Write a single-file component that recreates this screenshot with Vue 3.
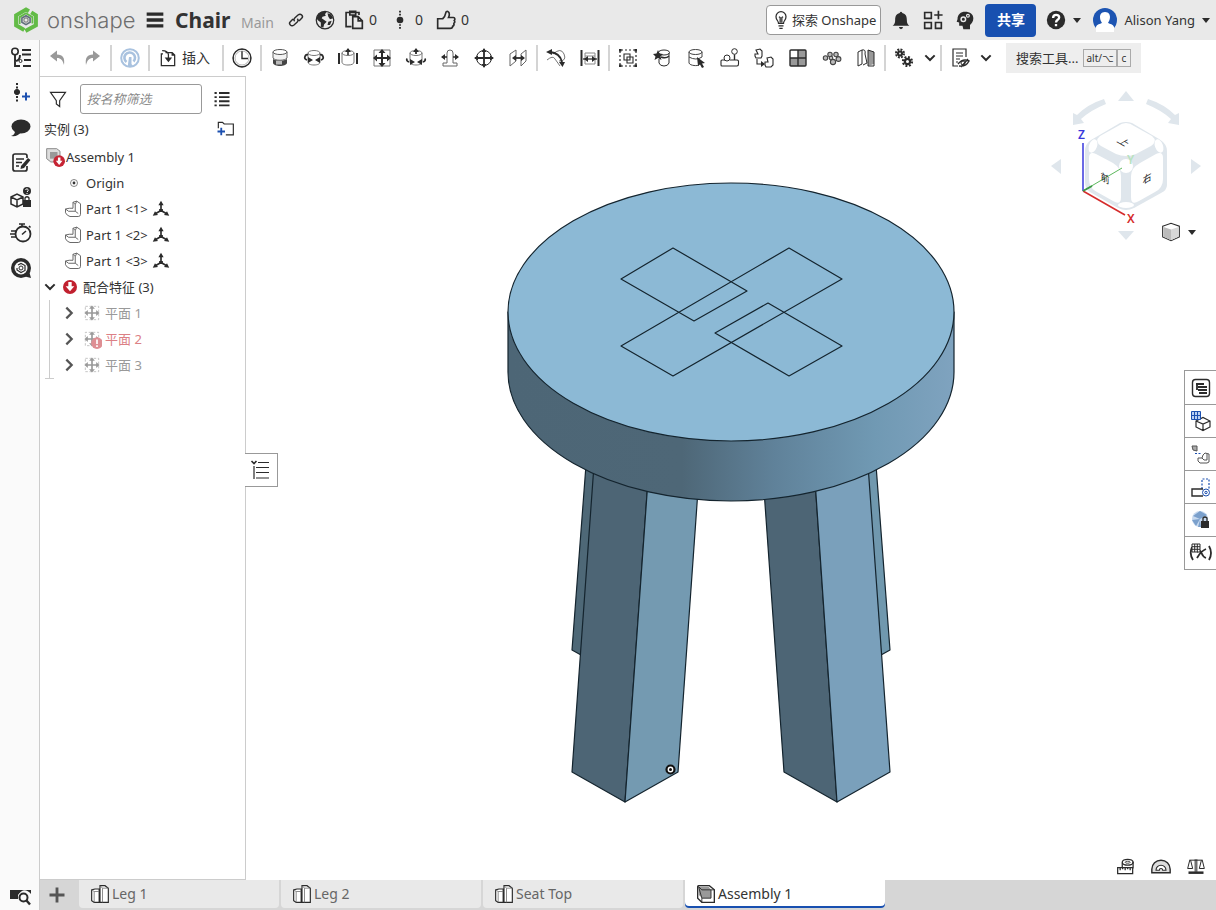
<template>
  <div class="app">
    <header class="topbar">
      <a class="brand" href="#" aria-label="onshape">
        <Icon name="logo" :size="28" />
        <span class="brand-name">onshape</span>
      </a>
      <button class="icon-btn menu" aria-label="菜单"><Icon name="menu" :size="20" /></button>
      <h1 class="doc-name">Chair</h1>
      <span class="workspace">Main</span>
      <button class="icon-btn link" aria-label="链接"><Icon name="link" :size="20" /></button>
      <button class="icon-btn globe" aria-label="公开"><Icon name="globe" :size="20" /></button>
      <button v-for="s in stats" :key="s.icon" class="stat" :class="s.icon">
        <Icon :name="s.icon" :size="20" />
        <span>{{ s.count }}</span>
      </button>
      <div class="spacer"></div>
      <button class="explore"><Icon name="bulb" :size="20" />探索 Onshape</button>
      <button class="icon-btn top-tool" aria-label="通知"><Icon name="bell" :size="20" /></button>
      <button class="icon-btn top-tool" aria-label="应用"><Icon name="apps" :size="20" /></button>
      <button class="icon-btn top-tool" aria-label="学习"><Icon name="head" :size="20" /></button>
      <button class="share">共享</button>
      <button class="icon-btn help" aria-label="帮助"><Icon name="help" :size="20" /><i class="caret"></i></button>
      <button class="account">
        <Icon name="avatar" :size="24" />
        <span>Alison Yang</span>
        <i class="caret"></i>
      </button>
    </header>

    <div class="body">
      <nav class="rail">
        <button v-for="r in rail" :key="r" class="icon-btn rail-btn" :aria-label="r"><Icon :name="r" :size="24" /></button>
        <button class="icon-btn rail-btn rail-end" aria-label="tabSearch"><Icon name="tabSearch" :size="24" /></button>
      </nav>

      <div class="workarea">
        <div class="toolbar">
          <template v-for="(group, i) in tools" :key="i">
            <span v-if="i" class="sep"></span>
            <button v-for="t in group" :key="t" class="icon-btn tool" :class="{ wide: t === 'insert', narrow: t.startsWith('chevron') }" :aria-label="t">
              <Icon :name="t.startsWith('chevron') ? 'chevron' : t" :size="t.startsWith('chevron') ? 16 : t === 'insert' ? 20 : 24" />
              <span v-if="t === 'insert'">插入</span>
            </button>
          </template>
          <button class="tool-search">搜索工具...<kbd>alt/⌥</kbd><kbd>c</kbd></button>
        </div>

        <div class="stage">
          <aside class="panel">
            <div class="filter">
              <Icon name="funnel" :size="20" />
              <input type="text" placeholder="按名称筛选" aria-label="按名称筛选" />
              <button class="icon-btn" aria-label="列表"><Icon name="list" :size="18" /></button>
            </div>
            <div class="panel-head">
              <span>实例 (3)</span>
              <button class="icon-btn" aria-label="新建文件夹"><Icon name="folderAdd" :size="20" /></button>
            </div>
            <ul class="tree">
              <li class="row root"><Icon name="assemblyError" :size="20" /><span>Assembly 1</span></li>
              <li class="row origin"><Icon name="origin" :size="12" /><span>Origin</span></li>
              <li v-for="n in 3" :key="n" class="row part">
                <Icon name="part" :size="18" />
                <span>Part 1 &lt;{{ n }}&gt;</span>
                <Icon name="mateTriad" :size="18" />
              </li>
              <li>
                <div class="row mates">
                  <Icon name="chevron" :size="16" />
                  <Icon name="suppressed" :size="16" />
                  <span>配合特征 (3)</span>
                </div>
                <ul class="mate-list">
                  <li v-for="n in 3" :key="n" class="row mate" :class="{ failed: n === 2 }">
                    <Icon name="chevronRight" :size="16" />
                    <Icon :name="n === 2 ? 'planarError' : 'planar'" :size="20" />
                    <span>平面 {{ n }}</span>
                  </li>
                </ul>
              </li>
            </ul>
          </aside>

          <main class="canvas">
            <svg class="model" viewBox="246 76 970 803" aria-label="Chair">
              <defs>
                <linearGradient id="rim" x1="508" x2="954" y1="0" y2="0" gradientUnits="userSpaceOnUse">
                  <stop offset="0" stop-color="#4d6676" />
                  <stop offset="0.39" stop-color="#4e6777" />
                  <stop offset="0.6" stop-color="#60829a" />
                  <stop offset="0.82" stop-color="#7099b3" />
                  <stop offset="1" stop-color="#7fa3bf" />
                </linearGradient>
              </defs>
              <g class="edges">
                <path fill="#4e6877" d="M586 465 572 650 581 655 596 465Z" />
                <path fill="#7098ae" d="M866 465 876 465 890 650 881 655Z" />
                <path fill="#4d6575" d="M594 465 572 772 625 802 648 480Z" />
                <path fill="#749ab1" d="M648 480 625 802 678 772 698 490Z" />
                <path fill="#4d6575" d="M764 490 784 772 837 802 815 480Z" />
                <path fill="#7aa0bb" d="M815 480 837 802 890 772 868 465Z" />
                <path fill="url(#rim)" d="M508 312V372A223 129 0 0 0 954 372V312Z" />
                <ellipse cx="731" cy="312" rx="223" ry="129" fill="#8cb9d5" />
                <path fill="none" d="M673 248 747 291 694 321 621 279ZM789 248 842 279 673 376 621 346ZM768 303 842 346 789 376 715 333Z" />
              </g>
              <circle cx="670.500" cy="769.500" r="4" fill="#fff" stroke="#111" stroke-width="2.200" />
              <circle cx="670.500" cy="769.500" r="1.500" fill="#111" />
            </svg>

            <svg class="view-cube" viewBox="1048 84 160 164" aria-label="视图方向">
              <g fill="#dfe6ec">
                <path d="M1126 91 1134 101H1118ZM1126 240 1134 231H1118ZM1051 166 1061 159V174ZM1201 166 1191 159V174Z" />
                <path d="M1104 99Q1088 104 1077 115L1073 113 1073 125 1084 123 1081 119Q1091 110 1106 104ZM1148 99Q1164 104 1175 115L1179 113 1179 125 1168 123 1171 119Q1161 110 1146 104Z" />
              </g>
              <path fill="#dfe6ec" d="M1120 123Q1126 121 1132 123L1159 139Q1167 144 1167 151V185Q1167 190 1161 193L1134 208Q1126 212 1118 208L1090 192Q1085 189 1085 182V151Q1085 144 1091 140Z" />
              <g fill="#fff">
                <path d="M1118 126Q1126 120 1134 126L1152 136Q1158 141 1151 146L1136 154Q1126 158 1116 154L1101 146Q1094 141 1100 136Z" />
                <path d="M1089 158Q1089 151 1096 154L1113 163Q1121 168 1121 176V197Q1121 206 1113 201L1097 192Q1089 188 1089 179Z" />
                <path d="M1163 158Q1163 151 1156 154L1140 163Q1131 168 1131 176V197Q1131 206 1139 201L1155 192Q1163 188 1163 179Z" />
                <ellipse cx="1093" cy="146" rx="4" ry="7" transform="rotate(20 1093 146)" />
                <ellipse cx="1159" cy="146" rx="4" ry="7" transform="rotate(-20 1159 146)" />
                <circle cx="1126" cy="166" r="7" /><ellipse cx="1126" cy="205" rx="8" ry="3" />
              </g>
              <path stroke="#3838dc" stroke-width="1.500" d="M1083 143V191" />
              <path stroke="#d52b2b" stroke-width="1.500" d="M1083 191 1125 215" />
              <path stroke="#5cb85c" d="M1083 191 1122 168" />
              <path stroke="#3c9a46" stroke-width="2" d="M1083 191 1092 186" />
              <g class="cube-face">
                <text x="-5" y="4" transform="matrix(.87 .5 -.87 .5 1124 142)">上</text>
                <text x="-5" y="4" transform="matrix(.87 .5 0 1 1105 178)">前</text>
                <text x="-5" y="4" transform="matrix(.87 -.5 0 1 1147 178)">右</text>
              </g>
              <g class="axis">
                <text x="1078" y="139" fill="#3838dc">Z</text>
                <text x="1127" y="223" fill="#d52b2b">X</text>
                <text x="1127" y="164" fill="#b7e2be">Y</text>
              </g>
            </svg>

            <button class="icon-btn view-menu" aria-label="视图"><Icon name="shadedCube" :size="20" /><i class="caret"></i></button>

            <button class="icon-btn list-flag" aria-label="特征列表"><Icon name="collapseList" :size="24" /></button>

            <div class="side-tabs">
              <button v-for="p in sidePanels" :key="p" class="icon-btn" :aria-label="p"><Icon :name="p" :size="24" /></button>
            </div>

            <div class="measure">
              <button v-for="m in measures" :key="m" class="icon-btn" :aria-label="m"><Icon :name="m" :size="20" /></button>
            </div>
          </main>
        </div>

        <footer class="tabs">
          <button class="icon-btn add-tab" aria-label="添加"><Icon name="plus" :size="20" /></button>
          <button v-for="t in tabs" :key="t.name" class="tab" :class="{ active: t.active }">
            <Icon :name="t.active ? 'assembly' : 'partStudio'" :size="20" />
            <span>{{ t.name }}</span>
          </button>
        </footer>
      </div>
    </div>
  </div>
</template>

<script setup>
import { h } from 'vue'

const cyl = '<path d="M6 7v9c0 2 2.500 3 6 3s6-1 6-3V7"/><ellipse cx="12" cy="7" rx="6" ry="2.500"/>'
const S = (d, w = 1.4) => `<path stroke-width="${w}" d="${d}"/>`
const F = (d, c = '#2b2b2b') => `<path fill="${c}" stroke="none" d="${d}"/>`
const cross = F('M12 3 15.500 7H13V11H17V8.500L21 12 17 15.500V13H13V17H15.500L12 21 8.500 17H11V13H7V15.500L3 12 7 8.500V11H11V7H8.500Z')
const gear = (x, y, r) =>
  `<circle cx="${x}" cy="${y}" r="${r}" stroke-width="2.200"/><circle cx="${x}" cy="${y}" r="${r + 2}" stroke-width="2" stroke-dasharray="1.900 ${(((r + 2) * Math.PI * 2) / 8 - 1.9).toFixed(2)}"/>`

// 所有图标都画在 24x24 的画布上
const icons = {
  logo: `<path stroke="#62bb46" stroke-width="3.400" d="M10.500 20.500 3.500 16.500V8L12 3 14.500 4.500M11.500 21.500 20.500 16.500V8L16.500 5.500"/><path stroke="#62bb46" stroke-width="1.600" d="M6.500 15.500V9.500L12 6.200 17.500 9.500V15"/><path stroke="#62707c" stroke-width="1.400" d="M12 8.300 15.500 10.300V14L12 16 8.500 14V10.300Z"/><circle cx="12" cy="12" r="1.800" stroke="#888"/>`,
  menu: S('M2 5H22M2 12H22M2 19H22', 4),
  link: S('M10 14C8 12 9 10 10.500 8.500L15 4.500C17 3 19 3 20.500 4.500S22 8 20.500 9.500L16.500 13.500M14 10C16 12 15 14 13.500 15.500L9 19.500C7 21 5 21 3.500 19.500S2 16 3.500 14.500L7.500 10.500', 2.2),
  globe: '<circle cx="12" cy="12" r="10.500" stroke-width="1.500"/>' + F('M2 9 4 5 8 2 14 2 12 5 13 7 9 8 8 10 11 12 14 14 11 17 10 21 7 20 7 15 3 12ZM15 4 19 5 22 10 18 11 16 8ZM16 14 20 13 18 18 15 18Z'),
  clipboard: S('M9 20H2.500V3H18V6M7 3V1.500H14V6H7V3M10.500 8H17L22 13V22H10.500ZM17 8V13H22', 2),
  versions: S('M12 1V7M12 17V23', 2.2).replace('/>', ' stroke-dasharray="2 1.500"/>') + '<circle cx="12" cy="12" r="4" fill="#2b2b2b" stroke="none"/>',
  thumb: S('M2 10.500H8C11 8 11.500 5 12 2.500C12.500 1 16 1.500 16 5C16 7 15 9 15 9H21C23 9 23 12 22 12.500C23 14 22.500 15.500 21.500 16C22 18 21 19 20 19.500C20 21 19 22 17 22H2Z', 2),
  bulb: S('M9 16C9 13 6 12 6 8A6 6 0 0 1 18 8C18 12 15 13 15 16ZM9 19H15M10 22H14M11 15V9L9.500 8M13 15V9L14.500 8', 1.5),
  bell: F('M12 2C13 2 13.500 3 13.500 3.500C18 4.500 19 8 19 12S20 17 22 19H2C4 17 5 16 5 12S6 4.500 10.500 3.500C10.500 3 11 2 12 2ZM9.500 20.500H14.500Q14 23 12 23T9.500 20.500Z'),
  apps: S('M2 3H10V10H2ZM2 15H10V22H2ZM15 15H22V22H15ZM18.500 1V11M13.500 6H23.500', 2),
  head: F('M3 11C3 5 7 2 12 2C18 2 22 5 22 10C22 14 20 16 18 18V23H10L9 19H5V15L2 14Z') + '<g stroke="#e9e9e9"><circle cx="10" cy="11" r="2.700" stroke-width="1.800"/><circle cx="15.500" cy="7" r="1.700" stroke-width="1.400"/></g>',
  help: '<circle cx="12" cy="12" r="11" fill="#2b2b2b" stroke="none"/><path stroke="#fff" stroke-width="2.800" d="M8.500 9.500C8.500 4.500 16 4.800 15.800 9C15.600 12 12 11.500 12 15M12 16.800V19.600"/>',
  avatar: '<rect width="24" height="24" rx="12" fill="#1c54b2" stroke="none"/>' + F('M12 4C16 4 17 7 17 9C17 12 15.500 14 15 15C17 16 20 16 21 19V24H3V19C4 16 7 16 9 15C8 13.500 7 12 7 9C7 7 8 4 12 4Z', '#fff'),

  tree: '<circle cx="6" cy="5.500" r="3.200" stroke-width="1.600"/>' + S('M6 9V20H11M6 15C10 15 11 13 11 9M13 4H22M13 8.500H22M15 14H22M14 20H22', 1.9) + '<circle cx="11.500" cy="15" r="1.500"/>',
  versionAdd: S('M8 2V8M8 15V21', 2).replace('/>', ' stroke-dasharray="2 1.500"/>') + '<circle cx="8" cy="11" r="2.600" fill="#2b2b2b"/><path stroke="#1c50b0" stroke-width="2" d="M13 15.500H21M17 11.500V19.500"/>',
  comment: '<ellipse cx="12" cy="10.500" rx="9.500" ry="7" fill="#2b2b2b" stroke="none"/>' + F('M6 15Q6 19 2 20Q9 21 12 16Z'),
  notes: S('M18 15V18Q18 20 16 20H6Q4 20 4 18V5Q4 3 6 3H16Q18 3 18 5V7M7 8H15M7 11.500H13M7 15H10', 1.7) + F('M12 15 19 7 21.500 9 15 17 11.500 18Z'),
  boxHelp: S('M2 11 8 8 14 11V18L8 21 2 18ZM2 11 8 14 14 11M8 14V21', 1.5) + '<circle cx="18" cy="5" r="4" fill="#2b2b2b" stroke="none"/><path stroke="#fff" d="M16.500 4C17 2 20 3 19 4.800L18 6M18 7V8"/>' + F('M14 14H22V21H14Z') + S('M16 14V12Q18 9.500 20 12V14', 1.3),
  timer: '<circle cx="14" cy="13" r="7.500" stroke-width="1.800"/>' + S('M10 3H16M13 3V5.500M13 13.500 17 10M2 10H7M1 13H6M2 16H7M20 5 21.500 6.500', 1.6),
  learn: '<circle cx="12" cy="12" r="10" fill="#2b2b2b" stroke="none"/>' + F('M14 20 22 22 20 15Z') + '<circle cx="12" cy="12" r="6.500" fill="#fafafa" stroke="none"/>' + S('M9 9 12 7.500 16 9.500V14.500L12 16.500 8 14V12', 1.2) + '<circle cx="12" cy="12" r="2"/>',
  tabSearch: F('M1 6H22V10Q15 2 9 11V15H1Z') + '<circle cx="14.500" cy="13.500" r="4" stroke-width="2"/>' + S('M17.500 16.500 21 20.500', 2.4),

  undo: F('M4 10 11 4.500V8.500C17 8.500 19 12 18 19C16.500 14 15 12 11 12V15.500Z', '#999'),
  redo: F('M20 10 13 4.500V8.500C7 8.500 5 12 6 19C7.500 14 9 12 13 12V15.500Z', '#999'),
  sync: '<circle cx="12" cy="12" r="8.800" stroke="#a9c2df" stroke-width="2"/><path stroke="#a9c2df" stroke-width="2.600" d="M8.500 16A5.300 5.300 0 1 1 15.500 15.500"/>' + F('M11 11H13.500V18L15 20H10V18Z', '#a9c2df'),
  insert: S('M9 5.500H17L20 8.500V21H4V7H6M5 3Q12 3 12.500 8V13M17 5.500V8.500H20', 1.5) + F('M8 11.500H17L12.500 17Z'),
  clock: '<circle cx="12" cy="12" r="9" stroke-width="1.400"/>' + S('M12 5V12.500H18M12 3V4M12 20V21M3 12H4M20 12H21') + '<circle cx="12" cy="12" r="7" stroke="#888" stroke-width=".6"/>',
  fastened: F('M5 13V17C6 21 18 21 19 17V13C16 15 8 15 5 13Z', '#444') + F('M8 15H14V18.500H8Z', '#bbb') + '<path fill="#f2f2f2" stroke="#666" d="M5 6V12C7 15 17 15 19 12V6"/><ellipse cx="12" cy="6" rx="7" ry="2.500" fill="#fff" stroke="#555"/>',
  revolute: '<g stroke="#777">' + cyl + '</g>' + S('M5 14Q2 13 3 10.500T6 9M19 14Q22 13 21 10.500T18 9', 1.8) + F('M6 11 11 14 6 17ZM18 11 13 14 18 17Z'),
  slider: '<g stroke="#777">' + cyl + '</g>' + S('M3 7V18M21 7V18', 2) + S('M12 3V9', 1.6) + F('M9 6 12 2 15 6Z'),
  planarTool: '<path stroke="#777" d="M4 4H20V20H4Z"/>' + cross,
  cylindrical: '<g stroke="#777">' + cyl + '</g>' + S('M5 16Q2 15 3 12.500M19 16Q22 15 21 12.500M12 8V4', 1.8) + F('M9 6 12 2 15 6ZM6 13 11 16 6 19ZM18 13 13 16 18 19Z'),
  pinSlot: '<path stroke="#666" d="M9 7V17M15 7V17M9 7Q9 4 12 4T15 7M9 17H5V20H19V17H15"/>' + S('M4 11H9M15 11H20', 1.6) + F('M3 11 7 8V14ZM21 11 17 8V14Z'),
  ball: '<circle cx="12" cy="12" r="7.500"/>' + S('M3 12H21M12 3V21', 1.8) + F('M12 2 14.500 6H9.500ZM12 22 9.500 18H14.500ZM2 12 6 9.500V14.500ZM22 12 18 9.500V14.500Z'),
  parallel: '<path stroke="#666" d="M4 8 10 4V15L4 20ZM15 8 20 4V15L15 20Z"/>' + S('M8 12H17', 1.8) + F('M6 12 10 9V15ZM19 12 15 9V15Z'),
  tangent: '<path stroke="#777" d="M9 8Q17 1 20 8T15 15M3 14Q9 9 11 13L16 20"/>' + S('M6 6Q16 7 18 16', 2) + F('M2 6 8 3 8 9ZM18.500 21 15 16H21Z'),
  width: '<path stroke="#888" d="M7 7H17V18H7ZM7 10H17"/>' + S('M3.500 4V20M20.500 4V20', 2) + S('M5 13H19', 1.3) + F('M10 10V16L6 13ZM14 10V16L18 13Z'),
  group: S('M5 4H19M20 5V19M19 20H5M4 19V5', 1.2).replace('/>', ' stroke-dasharray="2 2"/>') + F('M3 3H5.500V5.500H3ZM18.500 3H21V5.500H18.500ZM3 18.500H5.500V21H3ZM18.500 18.500H21V21H18.500Z') + S('M8 8H14V14H8ZM11 11H17V17H11Z', 1.1),
  mateStar: '<path d="M9 13V17Q10 20 14 20T19 17V7"/><ellipse cx="14" cy="6.500" rx="5.500" ry="2.500"/>' + S('M11 11Q16 13 19 10') + F('M8 4 9.500 7.500 13 8 10.500 10.500 11.500 14 8 12 4.500 14 5.500 10.500 3 8 6.500 7.500Z'),
  mateCursor: '<path stroke="#444" d="M5 6V17C6 20 14 20 15 19M5 11Q12 15 18 11V6"/><ellipse cx="11.500" cy="6" rx="6.500" ry="2.500" stroke="#444"/>' + F('M13 11 21 17 18 17.500 20 21 18 22 16 18.500 14 20Z'),
  linear: S('M7 14H4Q3 14 3 15V19Q3 20 4 20H19Q20.500 20 20.500 18V15Q20 14 19 14H12', 1.1) + '<circle cx="9" cy="12" r="3"/><circle cx="16.500" cy="5.500" r="2.800"/>' + S('M16.500 8.500V14'),
  replicate: S('M4 4 8 3 10 5V10L9 12H4L3 10V8H6ZM15 12 19 11 21 13V19L19 21H14L13 19V16H16ZM5 13V18H10', 1.1) + F('M9 15 13 18 9 21Z'),
  pattern: F('M12 4H20V20H4V12H12Z', '#999') + S('M5 4H19Q20 4 20 5V19Q20 20 19 20H5Q4 20 4 19V5Q4 4 5 4ZM12 4V20M4 12H20', 1.4),
  circular: '<g stroke-width="1.100" stroke="#444" fill="#bbb"><circle cx="5.500" cy="12" r="2.200"/><circle cx="10" cy="8.500" r="2.200"/><circle cx="16" cy="8.500" r="2.200"/><circle cx="18.500" cy="13" r="2.400"/><circle cx="13" cy="16" r="2.600"/><circle cx="11" cy="12" r="1.800"/></g>',
  section: S('M4 6 8 4V18L4 20ZM8 4Q12 3 11 8L13 17 9 19', 1) + F('M14 4 20 6V18L14 20Z', '#999') + S('M20 6 14 4V20H20Z', 1),
  gears: gear(8, 7.5, 2) + gear(15.5, 15.5, 2.6),
  bom: S('M10 20H5V3H18V11M8 7H15M8 10H15M8 13H12M8 16H10', 1.2) + S('M10 18Q15 12 21 15Q18 21 11 20M13 21 20 13', 1.4) + '<circle cx="15" cy="17" r="2"/>',
  chevron: S('M5 8 12 15 19 8', 3),
  chevronRight: S('M8 4 16 12 8 20', 3.4).replace('/>', ' stroke="#555"/>'),

  funnel: S('M3 4H21L14 14V21L10 18V14Z', 1.4),
  list: S('M8 4H22M8 9.500H22M8 15H22M8 20.500H22', 2.6) + S('M2 4H5M2 9.500H5M2 15H5M2 20.500H5', 2.6),
  folderAdd: S('M4 11V4H9L11 6H22V19H13', 1.4) + '<path stroke="#1c50b0" stroke-width="2.200" d="M3 15H12M7.500 10.500V19.500"/>',
  assembly: S('M2 3Q2 2 3 2H16L22 7V22H7L2 17Z', 1.6) + F('M3 3H15L18 7V17H8L3 13Z', '#999') + S('M3 3 7 7H18V17H7ZM7 17V22M18 7H22', 1.1),
  assemblyError: '<path fill="#ddd" stroke="#777" d="M2 2H14L18 5V18H7L2 14Z"/>' + F('M6 6H15V14H6Z', '#999') + '<circle cx="17" cy="17" r="7" fill="#c62434" stroke="none"/>' + F('M15.500 12.500H18.500V16.500H21L17 21.500 13 16.500H15.500Z', '#fff'),
  origin: '<circle cx="12" cy="12" r="7" stroke-width="1.600" stroke="#666"/><circle cx="12" cy="12" r="2.800" fill="#333" stroke="none"/>',
  part: '<path stroke="#666" stroke-width="1.300" d="M12 3 17 1.500 22 5V19Q22 22 19 22H8Q4 21 2 17V12L7 11H12ZM12 3 15 6V15H6L2 12M15 6 17 1.500M15 15 19 18"/>',
  mateTriad: S('M12 14V6M12 14 5 18M12 14 19 18', 2.2) + F('M12 1 15.500 7H8.500ZM1 21 4 15 8 20ZM23 21 16 20 20 15ZM9.500 12H14.500V16H9.500Z'),
  suppressed: '<circle cx="12" cy="12" r="10.500" fill="#c1202f" stroke="none"/>' + F('M9.500 4.500H14.500V11H18.500L12 18.500 5.500 11H9.500Z', '#fff'),
  planar: '<path stroke="#bbb" d="M4 4H20V20H4Z" stroke-dasharray="3 2"/>' + cross.replace('#2b2b2b', '#999'),
  planarError: '<path stroke="#bbb" d="M20 10V4H4V20H10" stroke-dasharray="3 2"/>' + cross.replace('#2b2b2b', '#999') + '<circle cx="18" cy="17" r="7" fill="#de8f94" stroke="none"/><path stroke="#fff" stroke-width="2" d="M18 12.500V18M18 19.500V21.500"/>',

  shadedCube: '<path fill="#fff" stroke-width="1.300" d="M2 5 12 1.500 22 5V18L12 22.500 2 18Z"/>' + F('M3 6 12 9V22L3 17.500Z', '#bbb') + F('M12 9 21 6V17.500L12 22Z', '#d8d8d8'),
  collapseList: S('M9 4.500H20M7 9.500H20M7 14.500H20M7 20H20M5 8V21', 1.2) + S('M2.500 3 5 5.500 7.500 3', 1.6),
  bomTable: '<rect x="3.500" y="3.500" width="17" height="17" rx="3" stroke-width="1.400"/>' + S('M7 8H15M9 11H18M9 14H18M10 17H18M8 7V14', 1.8),
  configs: '<path stroke-width="1.200" d="M7 12 14 8.500 21 12V18L14 21.500 7 18ZM7 12 14 15 21 12M14 15V21"/><path fill="#b9d0f4" stroke="#1c50b0" d="M2.500 2.500H11.500V10.500H2.500ZM5.500 2.500V10.500M8.500 2.500V10.500M2.500 6.500H11.500"/>',
  positions: '<path fill="#aaa" stroke="#555" d="M3 4H8V9L4 8Z"/><path stroke="#1c50b0" stroke-dasharray="2 1.500" d="M6 11.500H12"/><path stroke="#555" d="M14 13 16 11 20 12V20L18 21H11L9 19V16H13ZM13 16 15 18H18V12"/>',
  appearance: '<path stroke="#1c50b0" stroke-width="1.200" stroke-dasharray="2 1.500" d="M13 14V4H20V14"/><path stroke-width="1.400" d="M14 14H3V21H14"/><circle cx="17" cy="17.500" r="3.500" stroke="#1c50b0"/><circle cx="17" cy="17.500" r="1.200" stroke="#1c50b0"/>',
  simulation: '<circle cx="11" cy="11" r="8" fill="#c7d9ef" stroke="none"/>' + F('M11 3V11L4 8ZM3 12 11 11 7 18ZM11 3 18 7 11 11ZM9 19 11 12 12 19Z', '#7ba0cc') + F('M12 13H20V20H12Z') + S('M14 13V10Q16 8 18 10V13', 1.3),
  variables: S('M3 6Q0 13 4 19M20 5Q24 12 20 19M8 11Q11 8 12.500 12T17 17M17 8Q12 10 8 17', 1.8) + '<path fill="#fff" d="M3 3H11V11H3ZM5.700 3V11M8.300 3V11M3 5.700H11M3 8.300H11"/>',
  tape: S('M2 14H20V21H2ZM5 14V17M8 14V16M11 14V17M14 14V16M17 14V17M20.500 15V7', 1.5) + '<ellipse cx="14" cy="7.500" rx="6.500" ry="3.500" stroke-width="1.600"/><ellipse cx="14" cy="7.500" rx="3" ry="1.200"/>' + S('M7.500 8V14', 1.5),
  protractor: '<path fill="#ddd" stroke-width="1.700" d="M1 20V16A11 11 0 0 1 23 16V20Z"/><path fill="#fff" stroke-width="1.300" d="M6 17A6 6 0 0 1 18 17H14A2 2 0 0 0 10 17Z"/>',
  scale: S('M4 5H20M11 4V19M13 4V19M4.500 5 2 15H8L5.500 5M18.500 5 16 15H22L19.500 5', 1.2) + F('M3 18.500H21V21.500H3Z'),

  plus: '<path stroke="#555" stroke-width="3.400" d="M3 12H21M12 3V21"/>',
  partStudio: '<path fill="#fff" stroke-width="1.400" d="M2 7 6 6H11V22H5L2 20ZM12 2H18L22 5V22H12Z"/><path stroke="#777" d="M2 7 5 9H11M5 9V22M12 2 15 5H22M15 5V22"/>'
}

function Icon({ name, size }) {
  return h('svg', {
    viewBox: '0 0 24 24', width: size, height: size,
    fill: 'none', stroke: '#2b2b2b', 'aria-hidden': true, innerHTML: icons[name]
  })
}
Icon.props = ['name', 'size']

const stats = [
  { icon: 'clipboard', count: 0 },
  { icon: 'versions', count: 0 },
  { icon: 'thumb', count: 0 }
]

const rail = ['tree', 'versionAdd', 'comment', 'notes', 'boxHelp', 'timer', 'learn']

const tools = [
  ['undo', 'redo'],
  ['sync'],
  ['insert'],
  ['clock'],
  ['fastened', 'revolute', 'slider', 'planarTool', 'cylindrical', 'pinSlot', 'ball', 'parallel'],
  ['tangent', 'width'],
  ['group', 'mateStar', 'mateCursor', 'linear', 'replicate', 'pattern', 'circular', 'section'],
  ['gears', 'chevron-gears'],
  ['bom', 'chevron-bom']
]

const sidePanels = ['bomTable', 'configs', 'positions', 'appearance', 'simulation', 'variables']
const measures = ['tape', 'protractor', 'scale']

const tabs = [
  { name: 'Leg 1' },
  { name: 'Leg 2' },
  { name: 'Seat Top' },
  { name: 'Assembly 1', active: true }
]
</script>

<style>
body {
  margin: 0;
  background: #fff;
}
</style>

<style scoped>
.app {
  display: flex;
  flex-direction: column;
  min-height: 100vh;
  font-family: "Noto Sans", "Noto Sans CJK SC", sans-serif;
  font-size: 13px;
  line-height: 20px;
  color: #333;
}
.app svg {
  display: block;
  flex: none;
}
button {
  margin: 0;
  padding: 0;
  border: 0;
  background: none;
  color: inherit;
  font: inherit;
  white-space: nowrap;
}
.icon-btn {
  display: flex;
  align-items: center;
  justify-content: center;
}
.spacer {
  flex: 1;
}
.caret {
  border: 4px solid transparent;
  border-top: 5px solid #2b2b2b;
  border-bottom: 0;
}

/* 顶栏 */
.topbar {
  display: flex;
  align-items: center;
  height: 40px;
  padding: 0 6px 0 12px;
  background: #e9e9e9;
}
.brand {
  display: flex;
  align-items: center;
  gap: 7px;
  width: 133px;
  color: #6e6e6e;
  text-decoration: none;
}
.brand-name {
  font-family: Inter, sans-serif;
  font-size: 22px;
  font-weight: 300;
}
.doc-name {
  width: 66px;
  margin: 0 0 0 10px;
  font-size: 21px;
  line-height: 40px;
}
.workspace {
  width: 45px;
  margin-top: 6px;
  font-size: 14px;
  color: #999;
}
.link {
  width: 20px;
}
.link svg {
  width: 16px;
}
.globe {
  margin: 0 9px;
}
.stat {
  display: flex;
  align-items: center;
  gap: 5px;
  margin-right: 13px;
  font-size: 14px;
}
.explore {
  display: flex;
  align-items: center;
  height: 30px;
  margin-right: 4px;
  padding: 0 4px;
  border: 1px solid #999;
  border-radius: 4px;
  background: #fff;
  gap: 1px;
}
.top-tool {
  width: 32px;
}
.share {
  width: 51px;
  height: 33px;
  margin: 0 10px 0 4px;
  border-radius: 4px;
  background: #1850b0;
  color: #fff;
  font-size: 14px;
  font-weight: 600;
}
.help {
  gap: 7px;
  margin-right: 12px;
}
.account {
  display: flex;
  align-items: center;
  gap: 7px;
}

/* 主体 */
.body {
  flex: 1;
  display: flex;
}
.rail {
  display: flex;
  flex-direction: column;
  width: 39px;
  background: #fafafa;
  border-right: 1px solid #ccc;
}
.rail-btn {
  width: 41px;
  height: 35px;
}
.rail-end {
  height: 28px;
  margin-top: auto;
}
.workarea {
  flex: 1;
  display: flex;
  flex-direction: column;
  min-width: 0;
}

/* 工具栏 */
.toolbar {
  display: flex;
  align-items: center;
  height: 36px;
  padding-left: 1px;
}
.tool {
  width: 34px;
  height: 34px;
}
.tool.wide {
  width: 70px;
  justify-content: flex-start;
  padding-left: 7px;
  gap: 4px;
  font-size: 14px;
}
.tool.narrow {
  width: 18px;
}
.sep {
  width: 2px;
  height: 26px;
  margin: 0 1px;
  background: #d4d4d4;
}
.tool-search {
  display: flex;
  align-items: center;
  height: 30px;
  margin-left: 11px;
  padding: 0 10px;
  background: #eee;
}
kbd {
  padding: 0 2px;
  border: 1px solid #aaa;
  font-family: "Noto Sans", "DejaVu Sans", sans-serif;
  font-size: 10px;
  line-height: 16px;
}
kbd:first-of-type {
  margin-left: 5px;
}
kbd + kbd {
  padding: 0 4px;
}

.stage {
  flex: 1;
  display: flex;
}

/* 实例列表 */
.panel {
  width: 205px;
  border: 1px solid #ccc;
  border-left: 0;
}
.filter {
  display: flex;
  align-items: center;
  justify-content: space-between;
  padding: 7px 14px 0 8px;
}
.filter input {
  box-sizing: border-box;
  width: 122px;
  height: 30px;
  padding: 0 6px;
  border: 1px solid #999;
  border-radius: 3px;
  font: inherit;
  font-style: italic;
}
.filter input::placeholder {
  color: #8a8a8a;
}
.panel-head {
  display: flex;
  align-items: center;
  justify-content: space-between;
  height: 30px;
  padding: 0 10px 0 4px;
}
.tree,
.mate-list {
  margin: 0;
  padding: 0;
  list-style: none;
}
.row {
  display: flex;
  align-items: center;
  height: 26px;
}
.root {
  padding-left: 5px;
  gap: 1px;
}
.origin {
  padding-left: 28px;
  gap: 6px;
}
.part {
  padding-left: 24px;
  gap: 4px;
}
.mates {
  padding-left: 2px;
  gap: 4px;
}
.mates svg + svg {
  margin-right: 1px;
}
.mate-list {
  margin-left: 9px;
  border-left: 1px solid #ccc;
}
.mate-list::after {
  content: "";
  display: block;
  width: 9px;
  height: 1px;
  margin-left: -5px;
  background: #ccc;
}
.mate {
  padding-left: 11px;
  gap: 3px;
  color: #999;
}
.mate svg + svg {
  margin-left: 2px;
}
.mate.failed {
  color: #dc8085;
}

/* 模型视图 */
.canvas {
  position: relative;
  flex: 1;
  min-width: 0;
}
.model {
  width: 100%;
}
.edges {
  stroke: #14242e;
  stroke-width: 1.2;
  stroke-linejoin: round;
}
.view-cube {
  position: absolute;
  top: 8px;
  right: 8px;
  width: 160px;
  height: 164px;
}
.cube-face {
  font-size: 10px;
  fill: #222;
}
.axis {
  font-size: 12px;
  font-weight: 600;
}
.view-menu {
  position: absolute;
  top: 146px;
  right: 20px;
  gap: 7px;
}
.list-flag {
  position: absolute;
  top: 377px;
  left: -1px;
  box-sizing: border-box;
  width: 33px;
  height: 34px;
  border: 1px solid #999;
  border-left: 0;
  background: #fff;
}
.side-tabs {
  position: absolute;
  top: 294px;
  right: 0;
  border: 1px solid #999;
  border-right: 0;
}
.side-tabs button {
  width: 31px;
  height: 33px;
  background: #fff;
}
.side-tabs button + button {
  border-top: 1px solid #999;
}
.measure {
  position: absolute;
  right: 10px;
  bottom: 4px;
  display: flex;
  gap: 15px;
}

/* 标签页 */
.tabs {
  display: flex;
  gap: 2px;
  height: 30px;
  background: #d6d6d6;
}
.add-tab {
  width: 33px;
  margin-right: 4px;
}
.tab {
  display: flex;
  align-items: center;
  gap: 2px;
  width: 200px;
  height: 28px;
  padding-left: 11px;
  border-radius: 0 0 4px 4px;
  background: #e9e9e9;
  color: #666;
  font-size: 14px;
}
.tab.active {
  background: #fff;
  box-shadow: inset 0 -2px #1850b0;
  color: #333;
}
</style>
